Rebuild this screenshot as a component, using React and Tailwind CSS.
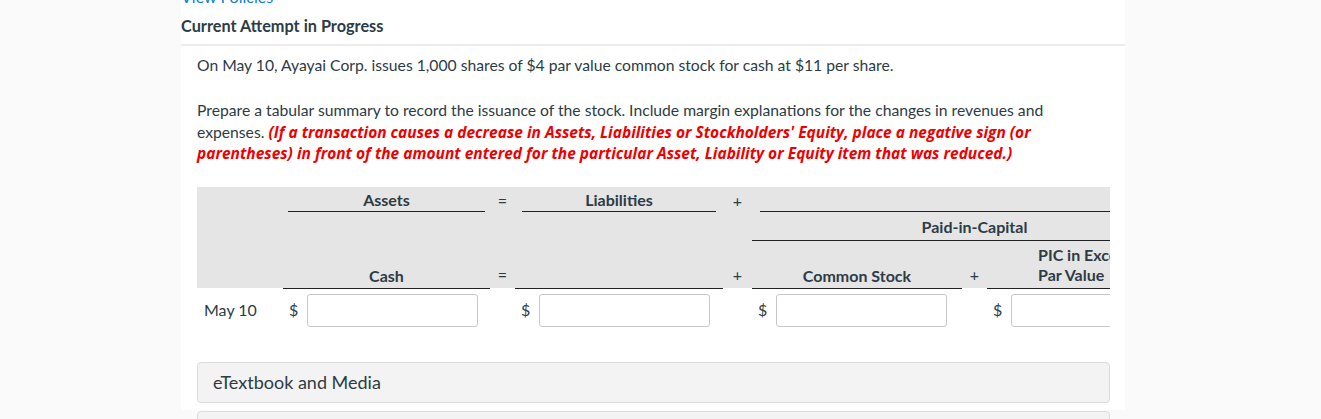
import React from 'react';

const line = 'border-b border-[#222]';

function Money() {
  return (
    <div className="flex items-center">
      <span className="w-[24px] pl-[6px] text-[16px]">$</span>
      <div className="h-[33px] w-[171px] shrink-0 rounded-[3px] border border-[#c8c8c8] bg-white"></div>
    </div>
  );
}

export default function App() {
  return (
    <div className="h-[419px] w-full overflow-hidden bg-[#fafafa] font-['Lato',sans-serif] text-[#2d3b45]">
      <div className="ml-[181px] h-full w-[944px] bg-white">
        <div className="-mt-[9px] h-[12px] text-[16px] leading-[12px] text-[#0a7bd6]">View Policies</div>
        <div className="pt-[13px] text-[16.3px] font-bold leading-[20px]">Current Attempt in Progress</div>
        <div className="mt-[8px] h-[2px] bg-[#ececec]"></div>

        <div className="pl-[16px] pr-[15px]">
          <p className="mt-[9px] text-[15.7px] leading-[21px]">
            On May 10, Ayayai Corp. issues 1,000 shares of $4 par value common stock for cash at $11 per share.
          </p>
          <p className="mt-[24px] text-[15.7px] leading-[21.5px]">
            Prepare a tabular summary to record the issuance of the stock. Include margin explanations for the changes in revenues and expenses.{' '}
            <span className="font-['Open_Sans',sans-serif] text-[15.5px] font-bold italic leading-[20px] text-[#ee0000]">
              (If a transaction causes a decrease in Assets, Liabilities or Stockholders' Equity, place a negative sign (or parentheses) in front of the amount entered for the particular Asset, Liability or Equity item that was reduced.)
            </span>
          </p>

          <div className="mt-[22px] w-[913px] overflow-hidden">
            <div className="w-[1000px]">
              <div className="w-[913px] bg-[#e5e5e5]">
                <div className="grid w-[1000px] grid-cols-[86px_207px_25px_208px_29px_210px_25px_210px] grid-rows-[25px_29px_47px] text-[16px] font-bold leading-[18px]">
                  <div className={`col-start-2 row-start-1 mx-[5px] pt-[4px] text-center ${line}`}>Assets</div>
                  <div className="col-start-3 row-start-1 pt-[5px] text-center font-normal">=</div>
                  <div className={`col-start-4 row-start-1 mx-[7px] pt-[4px] text-center ${line}`}>Liabilities</div>
                  <div className="col-start-5 row-start-1 pt-[5px] text-center font-normal">+</div>
                  <div className={`col-start-6 col-end-9 row-start-1 ml-[8px] ${line}`}></div>

                  <div className={`col-start-6 col-end-9 row-start-2 pt-[6px] text-center ${line}`}>Paid-in-Capital</div>

                  <div className="col-start-2 row-start-3 self-end pb-[3px] text-center">Cash</div>
                  <div className="col-start-3 row-start-3 self-end pb-[4px] text-center font-normal">=</div>
                  <div className="col-start-5 row-start-3 self-end pb-[4px] text-center font-normal">+</div>
                  <div className="col-start-6 row-start-3 self-end pb-[3px] text-center">Common Stock</div>
                  <div className="col-start-7 row-start-3 self-end pb-[4px] text-center font-normal">+</div>
                  <div className="col-start-8 row-start-3 self-end pb-[3px] pl-[51px] leading-[20px]">
                    PIC in Excess of
                    <br />
                    Par Value
                  </div>
                </div>
              </div>
              <div className="grid grid-cols-[86px_207px_25px_208px_29px_210px_25px_210px]">
                <div></div>
                <div className={line}></div>
                <div></div>
                <div className={line}></div>
                <div></div>
                <div className={line}></div>
                <div></div>
                <div className={line}></div>
              </div>
              <div className="mt-[5px] grid grid-cols-[86px_207px_25px_208px_29px_210px_25px_210px] items-center text-[16px]">
                <div className="pl-[7px]">May 10</div>
                <Money />
                <div></div>
                <Money />
                <div></div>
                <Money />
                <div></div>
                <Money />
              </div>
            </div>
          </div>

          <div className="mt-[35px] flex h-[41px] items-center rounded-[4px] border border-[#dcdcdc] bg-[#f3f3f3] pl-[15px] text-[18px]">
            eTextbook and Media
          </div>
          <div className="mt-[8px] h-[41px] rounded-[4px] border border-[#dcdcdc] bg-[#f3f3f3]"></div>
        </div>
      </div>
    </div>
  );
}
